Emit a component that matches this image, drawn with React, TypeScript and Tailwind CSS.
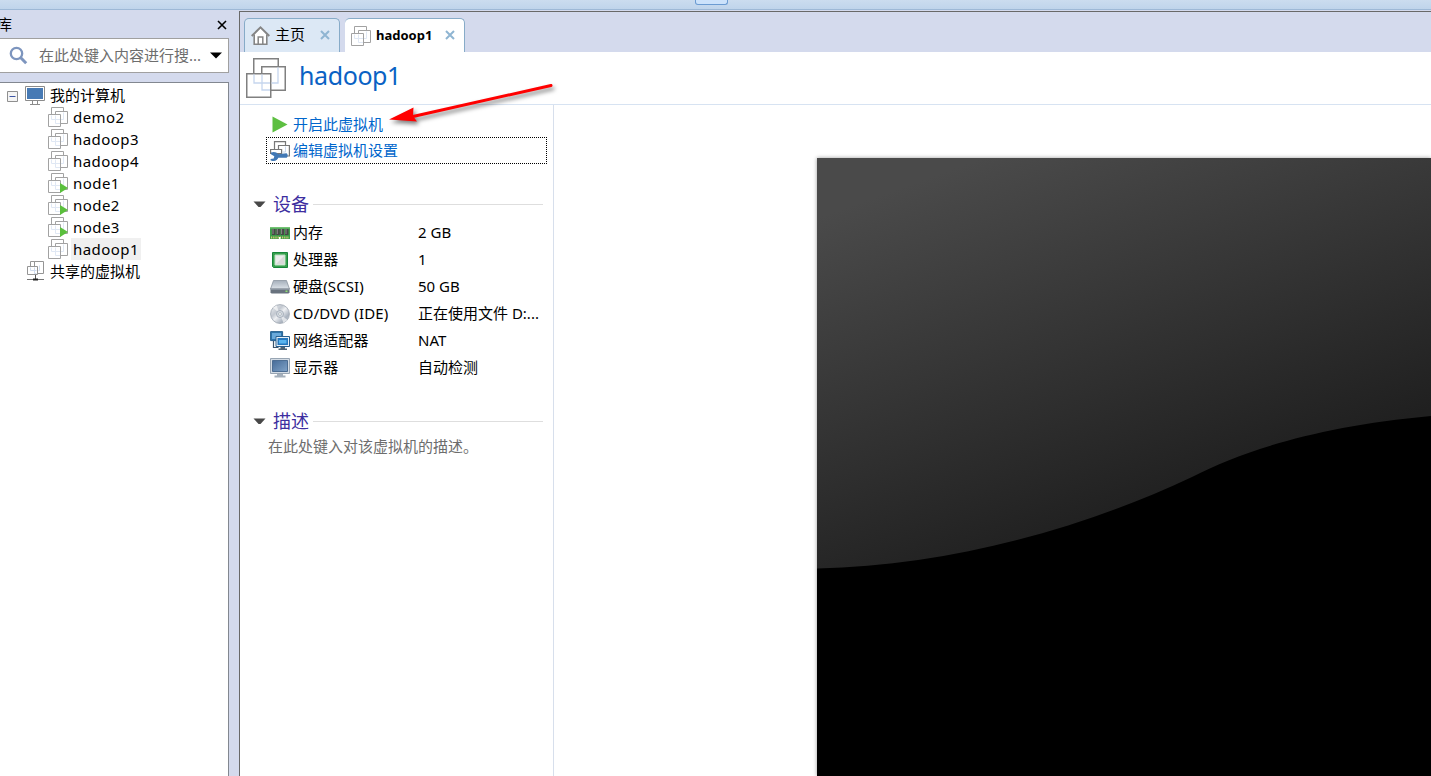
import type { ReactNode } from "react";

const TREE = [
  { name: "demo2" },
  { name: "hadoop3" },
  { name: "hadoop4" },
  { name: "node1", running: true },
  { name: "node2", running: true },
  { name: "node3", running: true },
  { name: "hadoop1", selected: true },
];

const DEVICES = [
  { icon: <MemoryIcon />, name: "内存", value: "2 GB" },
  { icon: <CpuIcon />, name: "处理器", value: "1" },
  { icon: <DiskIcon />, name: "硬盘(SCSI)", value: "50 GB" },
  { icon: <CdIcon />, name: "CD/DVD (IDE)", value: "正在使用文件 D:..." },
  { icon: <NetworkIcon />, name: "网络适配器", value: "NAT" },
  { icon: <DisplayIcon />, name: "显示器", value: "自动检测" },
];

function VmIcon({ running = false }: { running?: boolean }) {
  return (
    <svg width="20" height="20" viewBox="0 0 20 20" className="shrink-0">
      <g fill="#fff" stroke="#a2a2a2">
        <path d="M3.5 .5h12v12h-12z" />
        <path d="M7.5 4.5h12v12h-12z" />
        <path d="M.5 7.5h12v12H.5z" />
      </g>
      <path
        d="M3.5 8.500v4h8.500M7.500 8.500v8h4.500M15.500 5.500v7h-2.500"
        fill="none"
        stroke="#e0e8f4"
      />
      {running && <path d="M12 10l8 5-8 5z" fill="#5abf3c" />}
    </svg>
  );
}

function VmIconLarge() {
  return (
    <svg width="40" height="40" viewBox="0 0 40 40" className="shrink-0">
      <g fill="#fff" stroke="#808080" strokeWidth="1.500">
        <path d="M7.750 .750h24.500v24.500H7.750z" />
        <path d="M15.750 8.750h23.500v23.500H15.750z" />
        <path d="M.750 15.750h24v23.500h-24z" />
      </g>
      <path
        d="M8 16.500v8.500h16M16 16.500v15.500h8M32 9.500v15.500h-6.500"
        fill="none"
        stroke="#c6d6ee"
        strokeWidth="1.300"
      />
    </svg>
  );
}

function ComputerIcon() {
  return (
    <svg width="20" height="20" viewBox="0 0 20 20" className="shrink-0">
      <path d="M.5 .5h19v14H.5z" fill="#fff" stroke="#8b8b8b" />
      <path d="M2 2h16v11H2z" fill="#477ab5" />
      <path d="M7.500 15v3.500M12.500 15v3.500M5 18.500h10" stroke="#8b8b8b" fill="none" />
    </svg>
  );
}

function SharedIcon() {
  return (
    <svg width="18" height="20" viewBox="0 0 18 20" className="shrink-0">
      <g fill="#fff" stroke="#959595">
        <path d="M3.500 .5h9v9h-9z" />
        <path d="M7.500 .5h9v12h-9z" />
        <path d="M.5 5.500h10v8H.5z" />
      </g>
      <path d="M3.500 6.500v3h6M7.500 6.500v6h2M12.500 4.500v5h-1" stroke="#d0dcee" fill="none" />
      <path d="M8.500 14v4" stroke="#555" />
      <path d="M0 18.500h17" stroke="#777" />
      <path d="M6 17.500h5v2H6z" fill="#222" />
    </svg>
  );
}

function HomeIcon() {
  return (
    <svg width="19" height="19" viewBox="0 0 19 19" className="shrink-0">
      <path d="M3 9v9.200h13V9l-6.500-6.500z" fill="#fff" />
      <path d="M3.200 8.500v9.700h12.600V8.500" fill="none" stroke="#858585" strokeWidth="1.600" />
      <path d="M.7 10L9.500 1.400l8.800 8.600" fill="none" stroke="#858585" strokeWidth="2" />
      <path d="M7.200 18v-7h4.600v7" fill="none" stroke="#858585" strokeWidth="1.500" />
    </svg>
  );
}

function CloseIcon({ className, strokeWidth = 2 }: { className: string; strokeWidth?: number }) {
  return (
    <svg width="10" height="10" viewBox="0 0 10 10" className={className}>
      <path d="M1 1l8 8M9 1l-8 8" stroke="currentColor" strokeWidth={strokeWidth} />
    </svg>
  );
}

function SettingsIcon() {
  return (
    <svg width="20" height="20" viewBox="0 0 20 20" className="shrink-0">
      <g fill="#fff" stroke="#777" strokeWidth="1.200">
        <path d="M4.500 .6h11v11h-11z" />
        <path d="M8.500 4.500h10.900v10.500H8.500z" />
        <path d="M.6 8.500h11v4H.6z" />
      </g>
      <path d="M15.500 5.500v5.500h-3" stroke="#cbd8ec" fill="none" />
      <path
        d="M1 11.500c2.800-1.200 5.800-.5 7 1.700l8.300-.9c1.700.3 1.900 3.600.3 4.400l-8.300.1c-1 2.900-4.500 3.900-7.600 2.800l-.2-1.500 3.200-.6.600-2.200L1 13.200z"
        fill="#4178b5"
      />
    </svg>
  );
}

function MemoryIcon() {
  return (
    <svg width="20" height="14" viewBox="0 0 20 14">
      <path d="M0 1h20v12H0z" fill="#3d9b4a" />
      <path d="M0 1h20v1.500H0z" fill="#74c274" />
      <g fill="#474747">
        <path d="M2 3h3.500v6H2zM6.300 3h3.500v6H6.300zM10.600 3h3.500v6h-3.500zM15 3h3.500v6H15z" />
      </g>
      <path d="M3 3v5M7.300 3v5M11.600 3v5M16 3v5" stroke="#8a8a8a" />
      <path d="M1 11.500h18" stroke="#d4ca71" strokeWidth="2" strokeDasharray="1.200 1" />
      <path d="M9 11h1.500v3H9z" fill="#fff" />
    </svg>
  );
}

function CpuIcon() {
  return (
    <svg width="16" height="16" viewBox="0 0 16 16">
      <path d="M.5 .5h15v15H1.500l-1-1z" fill="#37a04d" stroke="#17853a" />
      <path d="M3 3h10v10H3z" fill="#ececec" stroke="#bde0c3" />
      <path d="M4 12l8-8v8z" fill="#d9d9d9" />
    </svg>
  );
}

function DiskIcon() {
  return (
    <svg width="20" height="14" viewBox="0 0 20 14">
      <defs>
        <linearGradient id="disk" x1="0" y1="0" x2="0" y2="1">
          <stop offset="0" stopColor="#a5afbb" />
          <stop offset="1" stopColor="#dde3e9" />
        </linearGradient>
      </defs>
      <path d="M3.500 .5h13l3 8.500H.5z" fill="url(#disk)" stroke="#8a949f" strokeWidth=".8" />
      <path d="M.5 8.500h19v4l-1 1h-17l-1-1z" fill="#68727e" />
      <path d="M1 9h18" stroke="#aab3bd" />
      <path d="M15.500 10.500h2v1.500h-2z" fill="#8ee070" />
    </svg>
  );
}

function CdIcon() {
  return (
    <svg width="20" height="20" viewBox="0 0 20 20">
      <defs>
        <linearGradient id="cd" x1="0" y1="0" x2="1" y2="1">
          <stop offset="0" stopColor="#f3f4f6" />
          <stop offset=".35" stopColor="#c2c8d0" />
          <stop offset=".5" stopColor="#eef0f3" />
          <stop offset=".75" stopColor="#aab3bf" />
          <stop offset="1" stopColor="#d4d9df" />
        </linearGradient>
      </defs>
      <circle cx="10" cy="10" r="9.400" fill="url(#cd)" stroke="#a4acb6" strokeWidth=".9" />
      <path d="M10 10L3 3.500 6.500 1.500zM10 10l7.500 6-4 3z" fill="#fff" opacity=".6" />
      <circle cx="10" cy="10" r="3.500" fill="#d7dce2" stroke="#9ba5b1" strokeWidth=".8" />
      <circle cx="10" cy="10" r="1.400" fill="#fff" stroke="#8d98a5" strokeWidth=".6" />
    </svg>
  );
}

function NetworkIcon() {
  return (
    <svg width="20" height="20" viewBox="0 0 20 20">
      <path d="M.6 .6h12v9H.6z" fill="#2e75ac" stroke="#27608f" />
      <path d="M2 2h9v6H2z" fill="#69a9da" />
      <path d="M3.500 10v6.500h5" stroke="#3a536b" strokeWidth="1.200" fill="none" />
      <path d="M6 5.500h13.500v10H6z" fill="#e8f0f7" stroke="#295f8e" />
      <path d="M7.500 7h10.500v7H7.500z" fill="#2678bd" />
      <path d="M9 9h7.500v3.500H9z" fill="#59b4ee" />
      <path d="M10.500 16h4.500v1.500h2v1.500H8.500v-1.500h2z" fill="#4f6474" />
    </svg>
  );
}

function DisplayIcon() {
  return (
    <svg width="20" height="20" viewBox="0 0 20 20">
      <defs>
        <linearGradient id="screen" x1="0" y1="0" x2="1" y2="1">
          <stop offset="0" stopColor="#456b98" />
          <stop offset="1" stopColor="#80a2c7" />
        </linearGradient>
      </defs>
      <path d="M.5 .5h19v15H.5z" fill="#d4dce5" stroke="#98a5b3" />
      <path d="M2.500 2.500h15v11h-15z" fill="url(#screen)" stroke="#4c6d93" />
      <path d="M7 16h6v1.500h2.500v2h-11v-2H7z" fill="#a4afbb" />
    </svg>
  );
}

function Section({ title, children }: { title: string; children: ReactNode }) {
  return (
    <section>
      <div className="flex h-6 items-center">
        <svg width="13" height="7" viewBox="0 0 13 7">
          <path d="M.5 .5h12L7.500 6h-2z" fill="#484848" />
        </svg>
        <h2 className="ml-[7px] text-[18px] leading-6 text-[#3d2ea0]">{title}</h2>
        <div className="ml-1 h-px w-[230px] bg-[#dedede]" />
      </div>
      {children}
    </section>
  );
}

function Sidebar() {
  return (
    <aside className="flex w-[229px] shrink-0 flex-col">
      <div className="flex h-7 items-center justify-between pr-[2px]">
        <span className="-ml-[3px] text-[15px]">库</span>
        <CloseIcon className="mt-px text-black" strokeWidth={1.6} />
      </div>
      <div className="flex h-[35px] items-center border border-l-0 border-[#a0a0a0] bg-white pl-[9px]">
        <svg width="19" height="19" viewBox="0 0 19 19" className="shrink-0">
          <circle cx="7.500" cy="7.500" r="5.700" fill="none" stroke="#7d95be" strokeWidth="2.300" />
          <path d="M11.500 11.500l5.700 5.700" stroke="#7d95be" strokeWidth="3" />
        </svg>
        <span className="ml-[11px] w-[170px] text-[15px] text-[#6d6d6d]">在此处键入内容进行搜...</span>
        <svg width="12" height="7" viewBox="0 0 12 7" className="ml-px shrink-0">
          <path d="M0 .5h12L6 6.500z" fill="#000" />
        </svg>
      </div>
      <div className="mt-[9px] flex-1 border-t border-r border-[#828790] bg-white pt-px">
        <div className="flex h-[22px] items-center pl-[7px] text-[15px]">
          <svg width="11" height="11" viewBox="0 0 11 11" className="mt-[2px]">
            <path d="M.5 .5h10v10H.5z" fill="#f4f4f4" stroke="#8f8f8f" />
            <path d="M2.500 5.500h6" stroke="#3d55a5" />
          </svg>
          <div className="mr-[5px] ml-[7px] pt-px">
            <ComputerIcon />
          </div>
          我的计算机
        </div>
        {TREE.map((vm) => (
          <div key={vm.name} className="flex h-[22px] items-center pl-12 text-[15px]">
            <VmIcon running={vm.running} />
            <span
              className={
                vm.selected
                  ? "ml-[3px] h-[22px] bg-[#f0f0f0] px-[2px] leading-[22px] tracking-[0.45px]"
                  : "ml-[5px] leading-[22px] tracking-[0.45px]"
              }
            >
              {vm.name}
            </span>
          </div>
        ))}
        <div className="flex h-[22px] items-center pl-[27px] text-[15px]">
          <SharedIcon />
          <span className="ml-[5px]">共享的虚拟机</span>
        </div>
      </div>
    </aside>
  );
}

function Tabs() {
  return (
    <div className="flex h-10 items-end gap-[5px] bg-[#d4daed] pl-1">
      <div className="flex h-[34px] w-24 items-center rounded-t-[5px] border border-b-0 border-[#87abc8] bg-[#dce8f5] pl-1.5">
        <HomeIcon />
        <span className="-mt-0.5 ml-[5px] text-[15px]">主页</span>
        <CloseIcon className="-mt-0.5 ml-[15px] text-[#8fb5d2]" />
      </div>
      <div className="flex h-[34px] w-[120px] items-center rounded-t-[5px] border-t border-r border-[#87abc8] bg-white pl-1.5">
        <VmIcon />
        <span className="ml-[5px] w-[69px] text-[13px] font-bold">hadoop1</span>
        <CloseIcon className="-mt-0.5 text-[#8fb5d2]" />
      </div>
    </div>
  );
}

function Details() {
  return (
    <div className="w-[314px] shrink-0 border-r border-[#d7dfec] text-[15px]">
      <div className="flex h-[32px] items-center pt-[6px] pl-[32px] text-[#0066cc]">
        <svg width="16" height="17" viewBox="0 0 16 17">
          <path d="M.5 .5v16L15.500 8.500z" fill="#5dbf41" />
        </svg>
        <span className="ml-[5px]">开启此虚拟机</span>
      </div>
      <div className="ml-[26px] flex h-[27px] w-[281px] items-center border border-dotted border-black pl-[3px] text-[#0066cc]">
        <SettingsIcon />
        <span className="ml-[3px]">编辑虚拟机设置</span>
      </div>
      <div className="mt-[28px] ml-[13px]">
        <Section title="设备">
          <ul className="mt-[3px] ml-[17px]">
            {DEVICES.map((device) => (
              <li key={device.name} className="flex h-[27px] items-center">
                <span className="flex w-5 justify-center">{device.icon}</span>
                <span className="ml-[3px] w-[125px] tracking-[0.1px]">{device.name}</span>
                <span>{device.value}</span>
              </li>
            ))}
          </ul>
        </Section>
      </div>
      <div className="mt-[28px] ml-[13px]">
        <Section title="描述">
          <p className="mt-[2px] ml-[15px] text-[#6d6d6d]">在此处键入对该虚拟机的描述。</p>
        </Section>
      </div>
    </div>
  );
}

function Preview() {
  return (
    <div className="flex-1 overflow-hidden pt-[53px] pl-[263px]">
      <svg
        width="614"
        height="618"
        viewBox="0 0 614 618"
        className="block bg-black shadow-[0_0_4px_rgba(0,0,0,0.4)]"
      >
        <defs>
          <linearGradient id="glass" gradientUnits="userSpaceOnUse" x1="19" y1="53" x2="150" y2="417">
            <stop offset="0" stopColor="#4a4a4a" />
            <stop offset="1" stopColor="#202020" />
          </linearGradient>
        </defs>
        <path d="M0 0H614V258C505 268 430 291 375 319C265 371 130 408 0 410.500Z" fill="url(#glass)" />
      </svg>
    </div>
  );
}

export default function App() {
  return (
    <div className="relative flex h-[776px] w-[1431px] flex-col overflow-hidden bg-[#d4daed] font-['Noto_Sans','Noto_Sans_CJK_SC',sans-serif] whitespace-nowrap text-black">
      {/* 工具栏底部 */}
      <div className="flex h-[10px] shrink-0 justify-center border-b border-[#9db8d6] bg-linear-to-b from-[#cbdcef] to-[#bfd4eb] pr-[8px]">
        <div className="h-[5px] w-[33px] rounded-b-[3px] border border-t-0 border-[#6b9bd2] bg-[#cce2fb]" />
      </div>

      <div className="flex min-h-0 flex-1">
        <Sidebar />
        <main className="mt-px ml-[10px] flex min-w-0 flex-1 flex-col border-t border-l border-[#696969] bg-white">
          <Tabs />
          <header className="flex h-[53px] shrink-0 items-center border-b border-[#d7e3f2] pl-1.5">
            <VmIconLarge />
            <h1 className="ml-[13px] pb-[7px] text-[25px] leading-10 tracking-[-0.4px] text-[#0a62c4]">hadoop1</h1>
          </header>
          <div className="flex min-h-0 flex-1">
            <Details />
            <Preview />
          </div>
        </main>
      </div>

      {/* 标注箭头 */}
      <svg
        width="180"
        height="60"
        viewBox="0 0 180 60"
        className="absolute top-[75px] left-[383px] drop-shadow-[2px_3px_2px_rgba(0,0,0,0.5)]"
      >
        <path d="M30 41.500L168 10.500" stroke="#f00" strokeWidth="3" strokeLinecap="round" />
        <path d="M6 44.500L30.500 32.500 30 41 34 46.500z" fill="#f00" />
      </svg>
    </div>
  );
}
